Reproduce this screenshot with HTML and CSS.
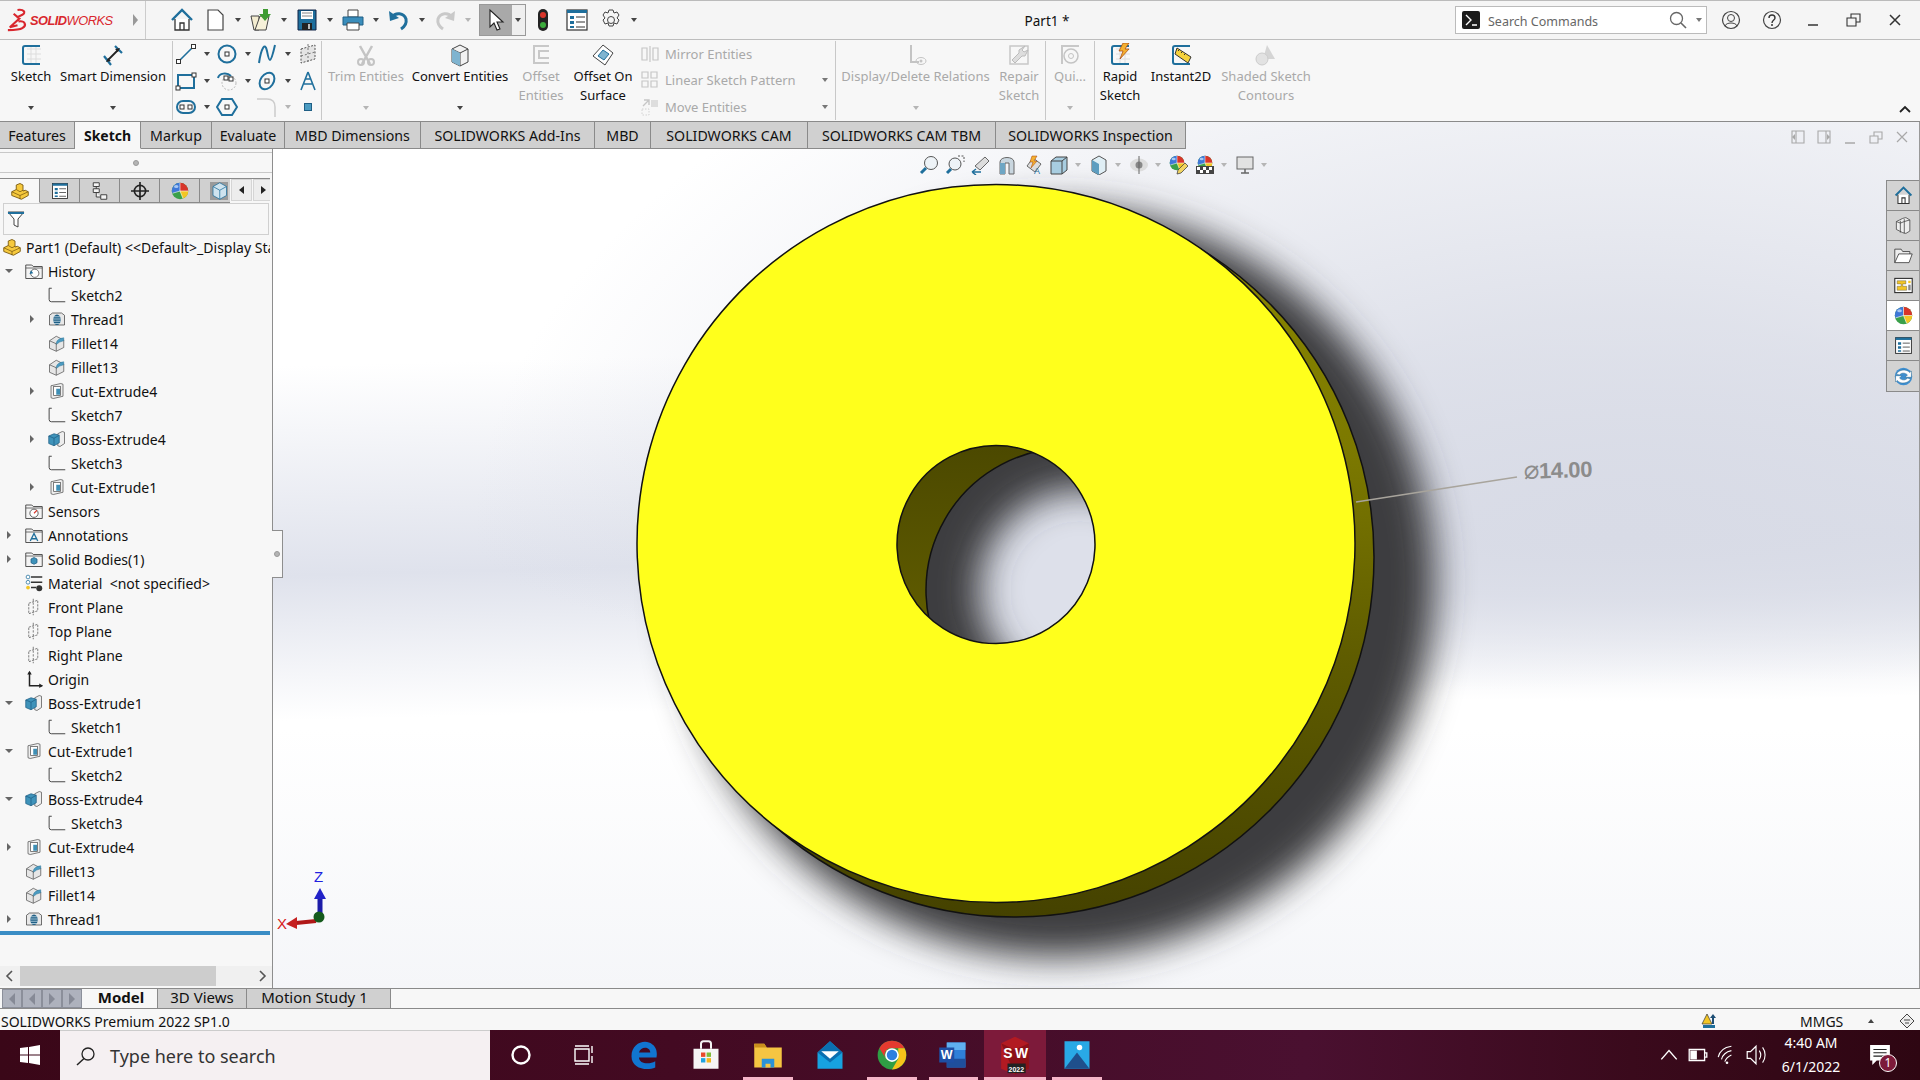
FILE: index.html
```html
<!DOCTYPE html>
<html lang="en">
<head>
<meta charset="utf-8">
<title>SOLIDWORKS Part1</title>
<link rel="stylesheet" href="styles.css">
</head>
<body>
<svg class="defs" width="0" height="0">
<defs>
<symbol id="s-home" viewBox="0 0 24 24"><path d="M2 12 12 2l10 10" fill="none" stroke="#1f6f9c" stroke-width="2.400"/><path d="M5 11v11h14V11" fill="#fff" stroke="#333" stroke-width="1.300"/><path d="M10 22v-7h4v7" fill="none" stroke="#333" stroke-width="1.300"/></symbol>
<symbol id="s-sketch" viewBox="0 0 24 24"><path d="M5 3H1.500v15q0 3 3 3H23" fill="none" stroke="#444" stroke-width="1.300"/></symbol>
<symbol id="s-thread" viewBox="0 0 24 24"><path d="M2 7l4-3h12l4 3v13H2z" fill="#e8e8e8" stroke="#444"/><ellipse cx="12" cy="13" rx="5" ry="7" fill="#1f5f85"/><path d="M7 9h10M7 12h10M7 15h10M8 18h8" stroke="#cfe3ee"/></symbol>
<symbol id="s-fillet" viewBox="0 0 24 24"><path d="M2 9v10l9 4 10-5V8L11 3z" fill="#e6e6e6" stroke="#555"/><path d="M11 14V12Q12 6 21 5v4q-6 1-10 5z" fill="#4b9bc1" stroke="#2a6f92" stroke-width=".6"/><path d="M2 9l9 4v10" fill="none" stroke="#555"/></symbol>
<symbol id="s-cut" viewBox="0 0 24 24"><path d="M4 5l13-3 3 1v16l-13 3-3-1z" fill="#eee" stroke="#555"/><rect x="7.500" y="6" width="9" height="12" fill="#fff" stroke="#555"/><path d="M11 9h5v8h-5z" fill="#3f8fb5"/></symbol>
<symbol id="s-boss" viewBox="0 0 24 24"><path d="M13 5l6-3 3 1v15l-6 4-3-1z" fill="#eee" stroke="#555"/><path d="M1 8l7-3 7 2v10l-7 4-7-3z" fill="#3f93ba" stroke="#1f5f85"/><path d="M1 8l7 3 7-4M8 11v10" fill="none" stroke="#1f5f85"/></symbol>
<symbol id="s-folder" viewBox="0 0 24 24"><path d="M1 4h8l2 2h12v16H1z" fill="#f4f4f4" stroke="#444" stroke-width="1.200"/><path d="M1 8h22" stroke="#444"/></symbol>
<symbol id="s-plane" viewBox="0 0 24 24"><path d="M5 7l12-4v14l-12 4z" fill="none" stroke="#555" stroke-dasharray="3 1.500"/><path d="M11 1v22" stroke="#555" stroke-dasharray="3 2"/></symbol>
<symbol id="s-part" viewBox="0 0 24 24"><path d="M1 13l6-3V4l5-2 4 2v8l3-1 4 2v5l-9 5-13-5z" fill="#f6c93d" stroke="#7a5a10" stroke-width="1.200"/><path d="M1 13l11 5 11-5M12 18v5M7 10l5 3 4-2" fill="none" stroke="#7a5a10"/></symbol>
<symbol id="s-list" viewBox="0 0 24 24"><rect x="2" y="2" width="20" height="20" fill="#fff" stroke="#333" stroke-width="1.200"/><rect x="2" y="2" width="20" height="3" fill="#1f6f9c"/><path d="M5 8h4v3H5zM5 13h4v3H5zM5 18h4v2H5z" fill="#1f6f9c"/><path d="M11 9h9M11 14h9M11 19h9" stroke="#333"/></symbol>
<symbol id="s-ball" viewBox="0 0 24 24"><circle cx="12" cy="12" r="11" fill="#3aa04a"/><path d="M12 12V1A11 11 0 0 0 1 12l1 3z" fill="#3f78d8"/><path d="M12 12V1a11 11 0 0 1 11 11z" fill="#d8352a"/><path d="M12 12h11a11 11 0 0 1-7 10z" fill="#f3c625"/><path d="M12 12V1M12 12H23M12 12L2 15M12 12l4 10" stroke="#fff" stroke-width=".8"/><ellipse cx="7" cy="6" rx="3" ry="2" fill="#a9c8f2"/></symbol>
</defs>
</svg>

<header class="titlebar">
  <div class="logo">
    <svg class="logo-mark" viewBox="0 0 26 26"><path d="M13 2c7-1 9 3 5 5l-6 3M9 6l6 5-10 9 8-2M14 14c7-1 9 4 4 7-3 2-9 2-15 2" fill="none" stroke="#d9272e" stroke-width="2.200"/></svg>
    <span class="logo-text"><b>SOLID</b>WORKS</span>
  </div>
  <span class="tri-right"></span>
  <div class="qat">
    <svg class="qi"><use href="#s-home"/></svg>
    <svg class="qi" viewBox="0 0 24 24"><path d="M5 2h10l5 5v15H5z" fill="#fff" stroke="#444" stroke-width="1.200"/></svg><span class="dd dk"></span>
    <svg class="qi" viewBox="0 0 24 24"><path d="M2 8h8v14H5z" fill="#f3ecd0" stroke="#444"/><path d="M6 22l5-14h9l-3 14z" fill="#f7f1d9" stroke="#444"/><path d="M14 1h5v5h3l-6 7-6-7h4z" fill="#3f9b32"/></svg><span class="dd dk"></span>
    <svg class="qi" viewBox="0 0 24 24"><path d="M3 2h18v20H3z" fill="#1f6f9c" stroke="#124"/><path d="M6 3h12v8H6z" fill="#fff"/><path d="M7 5h10M7 8h10" stroke="#888"/><path d="M7 15h10v7H7z" fill="#222"/><path d="M13 16h2v5h-2z" fill="#bbb"/></svg><span class="dd dk"></span>
    <svg class="qi" viewBox="0 0 24 24"><path d="M7 2h10v7H7z" fill="#fff" stroke="#444"/><path d="M2 9h20v8H2z" fill="#3a8dbb" stroke="#1f5f85"/><path d="M6 15h12v7H6z" fill="#fff" stroke="#444"/></svg><span class="dd dk"></span>
    <svg class="qi" viewBox="0 0 24 24"><path d="M5 9a8 8 0 0 1 14 2c1 5-2 8-5 10" fill="none" stroke="#1f6f9c" stroke-width="3"/><path d="M2 3l1 10 9-3z" fill="#1f6f9c"/></svg><span class="dd dk"></span>
    <svg class="qi" viewBox="0 0 24 24"><path d="M19 9A8 8 0 0 0 5 11c-1 5 2 8 5 10" fill="none" stroke="#c9c9c9" stroke-width="3"/><path d="M22 3l-1 10-9-3z" fill="#c9c9c9"/></svg><span class="dd lt"></span>
    <div class="select-btn">
      <div class="select-main"><svg class="qi" viewBox="0 0 24 24"><path d="M6 2l0 17 4-4 3 7 3-1-3-7 6 0z" fill="#fff" stroke="#222" stroke-width="1.100"/></svg></div>
      <span class="dd dk"></span>
    </div>
    <svg class="qi" viewBox="0 0 24 24"><rect x="7" y="1" width="10" height="22" rx="5" fill="#222"/><circle cx="12" cy="7" r="3" fill="#d8352a"/><circle cx="12" cy="17" r="3" fill="#3cab3c"/></svg>
    <svg class="qi" viewBox="0 0 24 24"><use href="#s-list"/></svg>
    <svg class="qi" viewBox="0 0 24 24"><circle cx="12" cy="12" r="3.500" fill="none" stroke="#444"/><path d="M10 2h4l1 3 3-1 2 3-2 3 2 2-2 4-3-1-1 3h-4l-1-3-3 1-2-4 2-2-2-3 2-3 3 1z" fill="none" stroke="#444"/></svg><span class="dd dk"></span>
  </div>
  <div class="doc-title">Part1 *</div>
  <div class="search">
    <svg class="term" viewBox="0 0 18 18"><rect width="18" height="18" rx="2" fill="#1c1c1c"/><path d="M4 4l5 5-5 5M10 14h5" fill="none" stroke="#fff" stroke-width="1.400"/></svg>
    <span class="search-text">Search Commands</span>
    <svg class="mag" viewBox="0 0 18 18"><circle cx="7.500" cy="7.500" r="6" fill="none" stroke="#666" stroke-width="1.300"/><path d="M12 12l5 5" stroke="#666" stroke-width="1.600"/></svg>
    <span class="dd md"></span>
  </div>
  <div class="win-ctrls">
    <svg class="wc" viewBox="0 0 20 20"><circle cx="10" cy="10" r="8.500" fill="none" stroke="#444" stroke-width="1.200"/><circle cx="10" cy="8" r="3.500" fill="none" stroke="#444"/><path d="M4 16c1-4 11-4 12 0" fill="none" stroke="#444"/></svg>
    <svg class="wc" viewBox="0 0 20 20"><circle cx="10" cy="10" r="8.500" fill="none" stroke="#444" stroke-width="1.200"/><path d="M7 8c0-4 6-4 6 0 0 2-3 2-3 5" fill="none" stroke="#333" stroke-width="1.400"/><circle cx="10" cy="15" r="1" fill="#333"/></svg>
    <svg class="wc" viewBox="0 0 20 20"><path d="M5 15h10" stroke="#333" stroke-width="1.500"/></svg>
    <svg class="wc" viewBox="0 0 20 20"><path d="M3 8h9v8H3zM7 8V4h9v8h-4" fill="none" stroke="#333" stroke-width="1.100"/></svg>
    <svg class="wc" viewBox="0 0 20 20"><path d="M5 5l10 10M15 5L5 15" stroke="#333" stroke-width="1.500"/></svg>
  </div>
</header>

<section class="ribbon">
  <div class="group g1">
    <div class="btn w62"><svg class="ri" viewBox="0 0 24 24"><path d="M8 6h14M8 11h14M8 16h14M12 3v17M17 3v17" stroke="#ddd"/><path d="M21 3H6Q4 3 4 5v14q0 2 2 2h15" fill="none" stroke="#1f6f9c" stroke-width="2"/></svg><span class="lb">Sketch</span><span class="dd dk"></span></div>
    <div class="btn w102"><svg class="ri" viewBox="0 0 24 24"><path d="M3 13l7 9M14 3l7 7" stroke="#1f6f9c" stroke-width="2.200" fill="none"/><path d="M7 17L17 7" stroke="#222" stroke-width="1.800"/><path d="M5 19l5-1-3-3zM19 5l-5 1 3 3z" fill="#222"/></svg><span class="lb">Smart Dimension</span><span class="dd dk"></span></div>
  </div>
  <div class="group g2">
    <div class="tool"><svg class="ti" viewBox="0 0 22 22"><path d="M4 18L18 4" stroke="#1f6f9c" stroke-width="1.600"/><rect x="1.500" y="16.500" width="4" height="4" fill="#fff" stroke="#333"/><rect x="16.500" y="1.500" width="4" height="4" fill="#fff" stroke="#333"/></svg><span class="dd dk"></span></div>
    <div class="tool"><svg class="ti" viewBox="0 0 22 22"><circle cx="11" cy="11" r="8.500" fill="none" stroke="#1f6f9c" stroke-width="2"/><rect x="9" y="9" width="4" height="4" fill="#fff" stroke="#333"/></svg><span class="dd dk"></span></div>
    <div class="tool"><svg class="ti" viewBox="0 0 22 22"><path d="M3 20C5 6 9-2 11 8s3 16 8-6" fill="none" stroke="#1f6f9c" stroke-width="2"/></svg><span class="dd dk"></span></div>
    <div class="tool"><svg class="ti" viewBox="0 0 22 22"><path d="M4 6l14-4v14L4 20z" fill="#e4e4e4" stroke="#555" stroke-dasharray="2 1.500"/><path d="M11 1v20M4 13l14-4" stroke="#777" stroke-dasharray="2 2"/></svg></div>
    <div class="tool"><svg class="ti" viewBox="0 0 22 22"><rect x="3" y="5" width="16" height="13" fill="none" stroke="#1f6f9c" stroke-width="2"/><rect x="1" y="16" width="4" height="4" fill="#fff" stroke="#333"/><rect x="17" y="3" width="4" height="4" fill="#fff" stroke="#333"/></svg><span class="dd dk"></span></div>
    <div class="tool"><svg class="ti" viewBox="0 0 22 22"><circle cx="13" cy="13" r="7" fill="none" stroke="#bbb" stroke-dasharray="2 1.500"/><path d="M2 8c1-5 9-6 13-2" fill="none" stroke="#1f6f9c" stroke-width="2"/><rect x="8" y="6" width="4" height="4" fill="#fff" stroke="#333"/><rect x="13" y="7" width="4" height="4" fill="#fff" stroke="#333"/></svg><span class="dd dk"></span></div>
    <div class="tool"><svg class="ti" viewBox="0 0 22 22"><ellipse cx="11" cy="11" rx="6.500" ry="9" transform="rotate(35 11 11)" fill="none" stroke="#1f6f9c" stroke-width="2"/><rect x="9" y="9" width="4" height="4" fill="#fff" stroke="#333"/></svg><span class="dd dk"></span></div>
    <div class="tool"><svg class="ti" viewBox="0 0 22 22"><path d="M11 2L4 20M11 2l7 18M7 14h8M8 9h6" fill="none" stroke="#1f6f9c" stroke-width="1.600"/></svg></div>
    <div class="tool"><svg class="ti" viewBox="0 0 22 22"><rect x="2" y="5" width="18" height="12" rx="6" fill="none" stroke="#1f6f9c" stroke-width="2"/><rect x="5" y="9" width="4" height="4" fill="#fff" stroke="#333"/><rect x="13" y="9" width="4" height="4" fill="#fff" stroke="#333"/></svg><span class="dd dk"></span></div>
    <div class="tool"><svg class="ti" viewBox="0 0 22 22"><path d="M6 3h10l5 8-5 8H6l-5-8z" fill="none" stroke="#1f6f9c" stroke-width="2"/><rect x="9" y="9" width="4" height="4" fill="#fff" stroke="#333"/></svg></div>
    <div class="tool"><svg class="ti" viewBox="0 0 22 22"><path d="M1 3h10q8 0 8 8v10" fill="none" stroke="#ccc" stroke-width="1.500"/></svg><span class="dd lt"></span></div>
    <div class="tool"><span class="sq"></span></div>
  </div>
  <div class="group g3">
    <div class="btn w88 off"><svg class="ri" viewBox="0 0 24 24"><path d="M6 3l10 18M18 3L8 21" stroke="#c4c4c4" stroke-width="2.500"/><circle cx="7" cy="19" r="3" fill="none" stroke="#c4c4c4" stroke-width="2"/><circle cx="17" cy="19" r="3" fill="none" stroke="#c4c4c4" stroke-width="2"/></svg><span class="lb">Trim Entities</span><span class="dd lt"></span></div>
    <div class="btn w100"><svg class="ri" viewBox="0 0 24 24"><path d="M4 6l8-4 8 4v13l-8 4-8-4z" fill="#f2f2f2" stroke="#444"/><path d="M4 6l8 4 8-4M12 10v13" fill="none" stroke="#444"/><path d="M4 6l8 4v13l-8-4z" fill="#7fb4d0"/></svg><span class="lb">Convert Entities</span><span class="dd dk"></span></div>
    <div class="btn w62 off"><svg class="ri" viewBox="0 0 24 24"><path d="M20 3H5v17h15M20 8H10v7h10" fill="none" stroke="#c8c8c8" stroke-width="2"/></svg><span class="lb">Offset<br>Entities</span></div>
    <div class="btn w62"><svg class="ri" viewBox="0 0 24 24"><path d="M2 13L12 2l10 8-8 12z" fill="#fff" stroke="#444"/><path d="M7 13l5-6 6 4-5 6z" fill="#7fb4d0" stroke="#1f6f9c"/></svg><span class="lb">Offset On<br>Surface</span></div>
    <div class="stack">
      <div class="line"><svg class="si" viewBox="0 0 18 18"><path d="M1 3h5v12H1zM12 3h5v12h-5zM9 1v16" fill="none" stroke="#c6c6c6" stroke-width="1.200"/></svg><span>Mirror Entities</span></div>
      <div class="line"><svg class="si" viewBox="0 0 18 18"><path d="M1 1h6v6H1zM10 1h6v6h-6zM1 10h6v6H1zM10 10h6v6h-6z" fill="none" stroke="#c6c6c6" stroke-width="1.200"/></svg><span>Linear Sketch Pattern</span><i class="dd md push"></i></div>
      <div class="line"><svg class="si" viewBox="0 0 18 18"><path d="M2 8l6-6M3 2h5v5" fill="none" stroke="#c6c6c6" stroke-width="1.400"/><rect x="10" y="2" width="7" height="7" fill="#ddd"/><path d="M1 11h7v6H1z" fill="none" stroke="#d2d2d2" stroke-dasharray="1.500 1.500"/></svg><span>Move Entities</span><i class="dd md push"></i></div>
    </div>
  </div>
  <div class="group g4">
    <div class="btn w159 off"><svg class="ri" viewBox="0 0 24 24"><path d="M7 2v17h8" fill="none" stroke="#c4c4c4" stroke-width="2"/><ellipse cx="17" cy="18" rx="5" ry="3.500" fill="none" stroke="#c4c4c4"/><circle cx="17" cy="18" r="1.500" fill="#c4c4c4"/></svg><span class="lb">Display/Delete Relations</span><span class="dd lt"></span></div>
    <div class="btn w48 off"><svg class="ri" viewBox="0 0 24 24"><path d="M3 3h18v18H3z" fill="none" stroke="#c8c8c8" stroke-width="1.500"/><path d="M18 3l-3 4 2 2 4-2-3 6-3 0-7 7-3-3 7-7v-3z" fill="#ddd" stroke="#bbb"/></svg><span class="lb">Repair<br>Sketch</span></div>
  </div>
  <div class="group g5">
    <div class="btn w48 off"><svg class="ri" viewBox="0 0 24 24"><path d="M3 3h18M4 3v18" stroke="#c8c8c8" stroke-width="2"/><circle cx="13" cy="13" r="7" fill="none" stroke="#c4c4c4" stroke-width="1.500"/><circle cx="13" cy="13" r="2.500" fill="none" stroke="#c4c4c4"/></svg><span class="lb">Qui...</span><span class="dd lt"></span></div>
  </div>
  <div class="group g6">
    <div class="btn w50"><svg class="ri" viewBox="0 0 24 24"><path d="M8 6h14M8 11h14M8 16h14M12 3v17M17 3v17" stroke="#ddd"/><path d="M21 3H6Q4 3 4 5v14q0 2 2 2h15" fill="none" stroke="#1f6f9c" stroke-width="2"/><path d="M15 0l6 0-4 6 4 0-9 10 3-8-4 0z" fill="#f4b030" stroke="#a4400a" stroke-width=".7"/></svg><span class="lb">Rapid<br>Sketch</span></div>
    <div class="btn w72"><svg class="ri" viewBox="0 0 24 24"><path d="M21 3H6Q4 3 4 5v14q0 2 2 2h15" fill="none" stroke="#1f6f9c" stroke-width="2"/><path d="M8 5l14 9-3 6L6 11z" fill="#f5d23c" stroke="#333"/><path d="M9 8l2-2M12 10l2-2M15 12l2-2" stroke="#333"/></svg><span class="lb">Instant2D</span></div>
    <div class="btn w98 off"><svg class="ri" viewBox="0 0 24 24"><path d="M13 2l8 14H9z" fill="#d5d5d5"/><circle cx="8" cy="16" r="6" fill="#e2e2e2" stroke="#ccc"/></svg><span class="lb">Shaded Sketch<br>Contours</span></div>
  </div>
  <svg class="collapse" viewBox="0 0 12 8"><path d="M1 7l5-5 5 5" fill="none" stroke="#222" stroke-width="1.800"/></svg>
</section>

<nav class="tabs">
  <span class="tab t75">Features</span>
  <span class="tab t66 on">Sketch</span>
  <span class="tab t71">Markup</span>
  <span class="tab t73">Evaluate</span>
  <span class="tab t136">MBD Dimensions</span>
  <span class="tab t174">SOLIDWORKS Add-Ins</span>
  <span class="tab t56">MBD</span>
  <span class="tab t157">SOLIDWORKS CAM</span>
  <span class="tab t188">SOLIDWORKS CAM TBM</span>
  <span class="tab t190">SOLIDWORKS Inspection</span>
</nav>

<main class="main">
  <aside class="panel">
    <div class="grip"><span class="dot"></span></div>
    <div class="ptabs">
      <span class="ptab on"><svg class="pi"><use href="#s-part"/></svg></span>
      <span class="ptab"><svg class="pi"><use href="#s-list"/></svg></span>
      <span class="ptab"><svg class="pi" viewBox="0 0 24 24"><path d="M3 1h8v5H3zM3 9h8v5H3zM13 17h8v6h-8zM7 6v3M7 14v6h6" fill="#f4f4f4" stroke="#333" stroke-width="1.200"/></svg></span>
      <span class="ptab"><svg class="pi" viewBox="0 0 24 24"><circle cx="12" cy="12" r="7.500" fill="none" stroke="#222" stroke-width="2.200"/><path d="M12 0v24M0 12h24" stroke="#222" stroke-width="2.200"/></svg></span>
      <span class="ptab"><svg class="pi"><use href="#s-ball"/></svg></span>
      <span class="ptab cut"><svg class="pi" viewBox="0 0 24 24"><rect width="24" height="24" fill="#9a9a9a"/><path d="M4 6l9-5 9 5v12l-9 5-9-5z" fill="#cfe3ee" stroke="#1f6f9c"/><path d="M4 6l9 5 9-5M13 11v12" fill="none" stroke="#1f6f9c"/></svg></span>
      <span class="parrow"><i class="tl"></i></span>
      <span class="parrow"><i class="tr"></i></span>
    </div>
    <div class="filter"><svg class="fi" viewBox="0 0 18 18"><path d="M1 2h16l-6 7v8l-4-2V9z" fill="#fff" stroke="#444"/><path d="M1 2h16v2H1z" fill="#1f6f9c"/></svg></div>
    <div class="tree">
      <div class="row root"><svg class="ic"><use href="#s-part"/></svg><span>Part1 (Default) &lt;&lt;Default&gt;_Display State 1&gt;</span></div>
      <div class="row"><i class="tw open"></i><svg class="ic" viewBox="0 0 24 24"><use href="#s-folder"/><circle cx="13" cy="15" r="5.500" fill="#fff" stroke="#444"/><path d="M8 11l-2 5 5-1" fill="#1f6f9c"/></svg><span>History</span></div>
      <div class="row sub"><i class="tw"></i><svg class="ic"><use href="#s-sketch"/></svg><span>Sketch2</span></div>
      <div class="row sub"><i class="tw shut"></i><svg class="ic"><use href="#s-thread"/></svg><span>Thread1</span></div>
      <div class="row sub"><i class="tw"></i><svg class="ic"><use href="#s-fillet"/></svg><span>Fillet14</span></div>
      <div class="row sub"><i class="tw"></i><svg class="ic"><use href="#s-fillet"/></svg><span>Fillet13</span></div>
      <div class="row sub"><i class="tw shut"></i><svg class="ic"><use href="#s-cut"/></svg><span>Cut-Extrude4</span></div>
      <div class="row sub"><i class="tw"></i><svg class="ic"><use href="#s-sketch"/></svg><span>Sketch7</span></div>
      <div class="row sub"><i class="tw shut"></i><svg class="ic"><use href="#s-boss"/></svg><span>Boss-Extrude4</span></div>
      <div class="row sub"><i class="tw"></i><svg class="ic"><use href="#s-sketch"/></svg><span>Sketch3</span></div>
      <div class="row sub"><i class="tw shut"></i><svg class="ic"><use href="#s-cut"/></svg><span>Cut-Extrude1</span></div>
      <div class="row"><i class="tw"></i><svg class="ic" viewBox="0 0 24 24"><use href="#s-folder"/><circle cx="12" cy="15" r="5.500" fill="#fff" stroke="#333"/><path d="M12 15l4-4" stroke="#d8352a" stroke-width="1.500"/></svg><span>Sensors</span></div>
      <div class="row"><i class="tw shut"></i><svg class="ic" viewBox="0 0 24 24"><use href="#s-folder"/><path d="M7 20l5-10 5 10M9 17h6" fill="none" stroke="#1f6f9c" stroke-width="1.800"/></svg><span>Annotations</span></div>
      <div class="row"><i class="tw shut"></i><svg class="ic" viewBox="0 0 24 24"><use href="#s-folder"/><path d="M8 12l4-2 4 2v5l-4 2-4-2z" fill="#3f93ba" stroke="#1f5f85"/></svg><span>Solid Bodies(1)</span></div>
      <div class="row"><i class="tw"></i><svg class="ic" viewBox="0 0 24 24"><path d="M8 4h15M8 11h15M8 18h7" stroke="#333" stroke-width="2"/><circle cx="4" cy="4" r="2.500" fill="#fff" stroke="#1f6f9c"/><circle cx="4" cy="11" r="2.500" fill="#fff" stroke="#1f6f9c"/><circle cx="4" cy="18" r="2.500" fill="#f3c625"/><circle cx="19" cy="19" r="4" fill="#333"/></svg><span>Material&nbsp; &lt;not specified&gt;</span></div>
      <div class="row"><i class="tw"></i><svg class="ic"><use href="#s-plane"/></svg><span>Front Plane</span></div>
      <div class="row"><i class="tw"></i><svg class="ic"><use href="#s-plane"/></svg><span>Top Plane</span></div>
      <div class="row"><i class="tw"></i><svg class="ic"><use href="#s-plane"/></svg><span>Right Plane</span></div>
      <div class="row"><i class="tw"></i><svg class="ic" viewBox="0 0 24 24"><path d="M6 3v18h17" fill="none" stroke="#222" stroke-width="2"/><path d="M3 6l3-5 3 5zM19 18l5 3-5 3z" fill="#222"/></svg><span>Origin</span></div>
      <div class="row"><i class="tw open"></i><svg class="ic"><use href="#s-boss"/></svg><span>Boss-Extrude1</span></div>
      <div class="row sub"><i class="tw"></i><svg class="ic"><use href="#s-sketch"/></svg><span>Sketch1</span></div>
      <div class="row"><i class="tw open"></i><svg class="ic"><use href="#s-cut"/></svg><span>Cut-Extrude1</span></div>
      <div class="row sub"><i class="tw"></i><svg class="ic"><use href="#s-sketch"/></svg><span>Sketch2</span></div>
      <div class="row"><i class="tw open"></i><svg class="ic"><use href="#s-boss"/></svg><span>Boss-Extrude4</span></div>
      <div class="row sub"><i class="tw"></i><svg class="ic"><use href="#s-sketch"/></svg><span>Sketch3</span></div>
      <div class="row"><i class="tw shut"></i><svg class="ic"><use href="#s-cut"/></svg><span>Cut-Extrude4</span></div>
      <div class="row"><i class="tw"></i><svg class="ic"><use href="#s-fillet"/></svg><span>Fillet13</span></div>
      <div class="row"><i class="tw"></i><svg class="ic"><use href="#s-fillet"/></svg><span>Fillet14</span></div>
      <div class="row"><i class="tw shut"></i><svg class="ic"><use href="#s-thread"/></svg><span>Thread1</span></div>
    </div>
    <div class="blue-line"></div>
    <div class="hscroll">
      <svg class="chev" viewBox="0 0 20 20"><path d="M12 5l-5 5 5 5" fill="none" stroke="#555" stroke-width="1.600"/></svg>
      <span class="thumb"></span>
      <svg class="chev end" viewBox="0 0 20 20"><path d="M8 5l5 5-5 5" fill="none" stroke="#555" stroke-width="1.600"/></svg>
    </div>
  </aside>

  <section class="canvas">
    <svg class="scene" viewBox="273 121 1647 867" width="1647" height="867">
      <defs>
        <filter id="blur" x="-20%" y="-20%" width="140%" height="140%"><feGaussianBlur stdDeviation="18"/></filter>
        <linearGradient id="wall" x1="0" y1="0" x2="0" y2="1"><stop offset="0" stop-color="#8c8800"/><stop offset=".35" stop-color="#7c7900"/><stop offset=".65" stop-color="#5e5b00"/><stop offset="1" stop-color="#454200"/></linearGradient>
        <linearGradient id="bore" x1="0" y1="0" x2="0" y2="1"><stop offset="0" stop-color="#4a4700"/><stop offset="1" stop-color="#6c6800"/></linearGradient>
        <clipPath id="inner"><circle cx="996" cy="544.500" r="99"/></clipPath>
      </defs>
      <path filter="url(#blur)" fill-rule="evenodd" fill="#3c3d40" d="M1056 207a379 375 0 1 0 .01 0zM1080 490a100 100 0 1 1-.01 0z"/>
      <circle cx="1014" cy="557" r="360" fill="url(#wall)" stroke="#111" stroke-width="1.500"/>
      <g clip-path="url(#inner)">
        <rect x="880" y="430" width="230" height="230" fill="#dde0ea"/>
        <path filter="url(#blur)" fill-rule="evenodd" fill="#3c3d40" d="M700 250h700v700H700zM1080 490a100 100 0 1 1-.01 0z"/>
        <path fill-rule="evenodd" fill="url(#bore)" stroke="#111" stroke-width="1.500" d="M880 430h230v230H880zM1068 448a142 142 0 1 0 .01 0z"/>
      </g>
      <path fill-rule="evenodd" fill="#ffff1c" stroke="#111" stroke-width="1.500" d="M996 184.500a359 359 0 1 0 .01 0zM996 445.500a99 99 0 1 1-.01 0z"/>
      <path d="M1356 502L1517 477" stroke="#a8a49c" stroke-width="1.500"/>
      <text class="dim" x="1524" y="479" transform="rotate(-2 1524 479)"><tspan class="dim-phi">⌀</tspan>14.00</text>
      <path d="M320 920v-22" stroke="#1c1ca8" stroke-width="5"/><path d="M314 899l6-11 6 11z" fill="#2222c8"/>
      <path d="M316 921l-20 2" stroke="#b01818" stroke-width="4"/><path d="M297 917l-11 7 11 5z" fill="#c52020"/>
      <circle cx="319" cy="917" r="5.500" fill="#145a1c"/>
      <text class="ax-z" x="314" y="882">Z</text><text class="ax-x" x="277" y="929">X</text>
    </svg>
    <div class="view-bar">
      <svg class="vi" viewBox="0 0 20 20"><circle cx="12" cy="8" r="6.500" fill="#eef3f7" stroke="#555"/><path d="M7 13l-5 5" stroke="#1f6f9c" stroke-width="3"/></svg>
      <svg class="vi" viewBox="0 0 20 20"><circle cx="10" cy="9" r="6" fill="#eef3f7" stroke="#555"/><path d="M6 14l-4 4" stroke="#1f6f9c" stroke-width="3"/><path d="M13 1h6v6" fill="none" stroke="#555" stroke-dasharray="2 1.500"/></svg>
      <svg class="vi" viewBox="0 0 20 20"><path d="M4 11l10-9 4 4-9 9z" fill="#ddd" stroke="#666"/><path d="M1 17h9M1 17l4-3M1 17l4 3" stroke="#1f6f9c" stroke-width="1.500" fill="none"/></svg>
      <svg class="vi" viewBox="0 0 20 20"><path d="M3 7c0-6 14-6 14 0v12h-5V8H8v11H3z" fill="#c9d6df" stroke="#666"/><path d="M3 8h5v11H3z" fill="#6ea6c4"/></svg>
      <svg class="vi" viewBox="0 0 20 20"><path d="M4 11l6-8 8 6-6 8z" fill="#ddd" stroke="#666"/><path d="M9 1l5 0-3 5h3l-6 7 2-6H7z" fill="#f4b030" stroke="#a4400a" stroke-width=".5"/><text x="11" y="19" class="vi-a">A</text></svg>
      <span class="vbox"><svg class="vi" viewBox="0 0 20 20"><path d="M2 6l5-4h11v13l-5 4H2z" fill="#a8cde0" stroke="#444"/><path d="M2 6h11v13M13 6l5-4" fill="none" stroke="#444"/></svg><span class="dd lt"></span></span>
      <span class="vbox"><svg class="vi" viewBox="0 0 20 20"><path d="M3 5l7-4 7 4v11l-7 4-7-4z" fill="#dfeef5" stroke="#555"/><path d="M3 5l7 4v11l-7-4z" fill="#5d9dc0"/></svg><span class="dd lt"></span></span>
      <span class="vbox"><svg class="vi" viewBox="0 0 20 20"><ellipse cx="10" cy="10" rx="9" ry="6.500" fill="#ddd"/><circle cx="10" cy="10" r="3.500" fill="#888"/><path d="M10 1v18" stroke="#666"/></svg><span class="dd lt"></span></span>
      <span class="vbox"><svg class="vi" viewBox="0 0 20 20"><use href="#s-ball" width="16" height="16"/><path d="M8 19l1-4 7-7 3 3-7 7z" fill="#f3d560" stroke="#444" stroke-width=".8"/></svg></span>
      <span class="vbox"><svg class="vi" viewBox="0 0 20 20"><use href="#s-ball" x="2" width="16" height="16"/><rect x="1" y="11" width="18" height="8" fill="#444"/><path d="M2 12h3v3H2zM8 12h3v3H8zM14 12h3v3h-3zM5 15h3v3H5zM11 15h3v3h-3z" fill="#fff"/></svg><span class="dd lt"></span></span>
      <span class="vbox"><svg class="vi" viewBox="0 0 20 20"><rect x="2" y="2" width="16" height="12" fill="#e2e2e2" stroke="#666"/><path d="M10 14v4M6 18h8" stroke="#666" stroke-width="1.500"/></svg><span class="dd lt"></span></span>
    </div>
    <div class="doc-ctrls">
      <svg class="dc" viewBox="0 0 14 14"><path d="M1 1h12v12H1zM5 1v12" fill="none" stroke="#a8a8a8" stroke-width="1.100"/><path d="M4 4v6L1 7z" fill="#a8a8a8"/></svg>
      <svg class="dc" viewBox="0 0 14 14"><path d="M1 1h12v12H1zM9 1v12" fill="none" stroke="#a8a8a8" stroke-width="1.100"/><path d="M10 4v6l3-3z" fill="#a8a8a8"/></svg>
      <svg class="dc" viewBox="0 0 14 14"><path d="M2 13h10" stroke="#a8a8a8" stroke-width="1.500"/></svg>
      <svg class="dc" viewBox="0 0 14 14"><path d="M1 6h8v7H1zM5 6V2h8v7H9" fill="none" stroke="#a8a8a8" stroke-width="1.100"/></svg>
      <svg class="dc" viewBox="0 0 14 14"><path d="M2 2l10 10M12 2L2 12" stroke="#a8a8a8" stroke-width="1.200"/></svg>
    </div>
    <div class="taskpane">
      <span class="tp"><svg class="tpi"><use href="#s-home"/></svg></span>
      <span class="tp"><svg class="tpi" viewBox="0 0 24 24"><path d="M3 7l4-2 4-2 4-1 5 3v14l-5 3-4-1-8-4z" fill="#eee" stroke="#444"/><path d="M8 6v15M13 4v18M3 7l5 2 5-2 7-2" fill="none" stroke="#444"/></svg></span>
      <span class="tp"><svg class="tpi" viewBox="0 0 24 24"><path d="M1 21V4h8l2 3h9v3" fill="#eee" stroke="#333"/><path d="M1 21l5-11h17l-4 11z" fill="#fff" stroke="#333"/></svg></span>
      <span class="tp"><svg class="tpi" viewBox="0 0 24 24"><rect x="1" y="3" width="22" height="18" fill="#fff" stroke="#222" stroke-width="1.300"/><path d="M4 6h11v4h-4v3h5v5H4v-5h5v-3H4z" fill="#f3c625" stroke="#444" stroke-width=".5"/><rect x="18" y="6" width="3" height="3" fill="#f3c625"/><rect x="18" y="11" width="3" height="7" fill="#888"/></svg></span>
      <span class="tp on"><svg class="tpi"><use href="#s-ball"/></svg></span>
      <span class="tp"><svg class="tpi"><use href="#s-list"/></svg></span>
      <span class="tp"><svg class="tpi" viewBox="0 0 24 24"><circle cx="12" cy="12" r="11" fill="#3f8fd0"/><path d="M3 9c3-6 13-7 17-2l2-2v8h-8l3-3c-3-3-8-3-10 0zM21 15c-3 6-13 7-17 2l-2 2v-8h8l-3 3c3 3 8 3 10 0z" fill="#fff" stroke="#1f5f85" stroke-width=".6"/></svg></span>
    </div>
  </section>
  <div class="notch"><span class="dot"></span></div>
</main>

<nav class="btabs">
  <div class="navs"><span class="nav"><i class="nl"></i></span><span class="nav"><i class="nl"></i></span><span class="nav"><i class="nr"></i></span><span class="nav"><i class="nr"></i></span></div>
  <span class="btab b76 on">Model</span>
  <span class="btab b89">3D Views</span>
  <span class="btab b144">Motion Study 1</span>
</nav>

<footer class="status">
  <span class="st-text">SOLIDWORKS Premium 2022 SP1.0</span>
  <svg class="st-ic" viewBox="0 0 16 16"><path d="M6 1L1 11h10z" fill="#f3c625" stroke="#333" stroke-width=".7"/><path d="M12 1l3 4h-2v6h-2V5H9z" fill="#1f4f75"/><path d="M2 12h12v3H2z" fill="#1f6f9c"/></svg>
  <span class="st-units">MMGS</span>
  <span class="st-up"></span>
  <svg class="st-end" viewBox="0 0 16 16"><path d="M1 8l7-7 7 7-7 7z" fill="#eee" stroke="#444"/><path d="M5 7h6M6 10h4" stroke="#444"/></svg>
</footer>

<div class="taskbar">
  <span class="start"><svg class="win" viewBox="0 0 20 20"><path d="M0 3l8-1v7.500H0zM9 2l11-2v9.500H9zM0 10.500h8V18l-8-1zM9 10.500h11V20l-11-2z" fill="#fff"/></svg></span>
  <div class="tsearch"><svg class="tmag" viewBox="0 0 20 20"><circle cx="12" cy="8" r="6" fill="none" stroke="#222" stroke-width="1.300"/><path d="M8 12.500L1 19" stroke="#222" stroke-width="1.500"/></svg><span>Type here to search</span></div>
  <div class="apps">
    <span class="app"><svg class="ai" viewBox="0 0 24 24"><circle cx="12" cy="12" r="8.500" fill="none" stroke="#fff" stroke-width="2.400"/></svg></span>
    <span class="app"><svg class="ai" viewBox="0 0 24 24"><path d="M4 3h14M4 6h14v12H4zM4 21h14M21 3v7M21 13v7" fill="none" stroke="#fff" stroke-width="1.400"/></svg></span>
    <span class="app"><svg class="ai big" viewBox="0 0 24 24"><path d="M2 13C2 4 10 0 16 2c5 2 7 6 6 12H8c0 5 8 6 13 3v5c-7 3-19 1-19-9zM8 10h9c0-5-8-5-9 0z" fill="#1175d0"/></svg></span>
    <span class="app"><svg class="ai big" viewBox="0 0 24 24"><path d="M2 7h20v16H2z" fill="#f5f5f5"/><path d="M8 7V3q0-2 2-2h4q2 0 2 2v4" fill="none" stroke="#f5f5f5" stroke-width="1.600"/><path d="M8 10h3.500v3.500H8z" fill="#e8492c"/><path d="M12.500 10H16v3.500h-3.500z" fill="#7fbb3a"/><path d="M8 14.500h3.500V18H8z" fill="#1fa3e0"/><path d="M12.500 14.500H16V18h-3.500z" fill="#f3b51c"/></svg></span>
    <span class="app under"><svg class="ai big" viewBox="0 0 24 24"><path d="M1 3h8l2 3h12v16H1z" fill="#f5c542"/><path d="M1 3h8l2 3H1z" fill="#c98f1c"/><path d="M7 15h10v7H7z" fill="#2a92d8"/><path d="M10 19h4v3h-4z" fill="#f5c542"/></svg></span>
    <span class="app"><svg class="ai big" viewBox="0 0 24 24"><path d="M12 1L2 10v13h20V10z" fill="#17a2e0"/><path d="M12 1L2 10l10 8 10-8z" fill="#0b6fb0"/><path d="M5 9h14l-7 6z" fill="#fff"/></svg></span>
    <span class="app under"><svg class="ai big" viewBox="0 0 24 24"><circle cx="12" cy="12" r="11.500" fill="#2f9e44"/><path d="M2 6.500A11.500 11.500 0 0 1 22 6.500H12a5.500 5.500 0 0 0-5 8.500z" fill="#e53a2f"/><path d="M22 6.500A11.500 11.500 0 0 1 12 23.500L17 15V6.500z" fill="#f6c21a"/><circle cx="12" cy="12" r="5.500" fill="#fff"/><circle cx="12" cy="12" r="4.200" fill="#2d7fe0"/></svg></span>
    <span class="app under"><svg class="ai big" viewBox="0 0 24 24"><path d="M7 2h15v20H7z" fill="#2f7fd8"/><path d="M7 2h15v6H7z" fill="#5fb0f0"/><path d="M7 15h15v7H7z" fill="#1f4f9c"/><path d="M1 6h12v12H1z" fill="#1e4fa5"/><text x="7" y="15.500" class="w-l">W</text></svg></span>
    <span class="app sw under"><svg class="ai bigger" viewBox="0 0 30 36"><path d="M15 1l13 6v24l-13 5-13-5V7z" fill="#b21a22"/><path d="M2 7l13 6 13-6v24l-13 5z" fill="#8c1118"/><text x="4" y="21" class="sw-l">S</text><text x="15" y="21" class="sw-l">W</text><rect x="8" y="26" width="17" height="9" fill="#222"/><text x="9" y="33.500" class="sw-y">2022</text></svg></span>
    <span class="app under"><svg class="ai big" viewBox="0 0 24 24"><rect x="2" y="1" width="20" height="22" fill="#29a9e6"/><path d="M2 23l10-13 10 13z" fill="#1f4f8c"/><circle cx="14" cy="6" r="2.200" fill="#fff"/></svg></span>
  </div>
  <div class="tray">
    <svg class="tr-i" viewBox="0 0 20 20"><path d="M3 14l7-8 7 8" fill="none" stroke="#fff" stroke-width="1.300"/></svg>
    <svg class="tr-i" viewBox="0 0 20 20"><path d="M2 5h14v10H2zM16 8h2v4h-2z" fill="none" stroke="#fff" stroke-width="1.200"/><path d="M3 6h6v8H3z" fill="#fff"/></svg>
    <svg class="tr-i" viewBox="0 0 20 20"><path d="M2 12C3 7 7 3 14 2M5 14c1-4 4-7 9-8M8 16c1-3 2-4 6-6" fill="none" stroke="#fff"/><circle cx="10" cy="17" r="1.200" fill="#fff"/></svg>
    <svg class="tr-i" viewBox="0 0 20 20"><path d="M2 7h3l5-5v16l-5-5H2z" fill="none" stroke="#fff" stroke-width="1.100"/><path d="M13 6c2 3 2 5 0 8M16 3c3 4 3 10 0 14" fill="none" stroke="#fff"/></svg>
    <div class="clock"><span>4:40 AM</span><span>6/1/2022</span></div>
    <div class="notif">
      <svg class="nt" viewBox="0 0 20 20"><path d="M1 1h18v14H7l-4 4v-4H1z" fill="#fff"/><path d="M4 5h12M4 8h12M4 11h12" stroke="#222"/></svg>
      <span class="badge">1</span>
    </div>
  </div>
</div>
</body>
</html>
```
FILE: styles.css
```css
* { box-sizing: border-box; }
html, body { margin: 0; padding: 0; }
body {
  width: 1920px; height: 1080px; overflow: hidden;
  display: flex; flex-direction: column;
  font-family: "Noto Sans", "Open Sans", sans-serif;
  font-size: 14px; color: #111; background: #f7f7f7;
}
svg { display: block; flex: none; }
.defs { position: absolute; }

/* triangles */
.dd { display: block; width: 0; height: 0; flex: none; border-left: 3.5px solid transparent; border-right: 3.5px solid transparent; border-top: 4px solid #444; }
.dd.lt { border-top-color: #b5b5b5; }
.dd.md { border-top-color: #777; }

/* title bar */
.titlebar { height: 40px; display: flex; align-items: center; background: #f5f5f5; border-top: 1px solid #bbb; border-bottom: 1px solid #bdbdbd; flex: none; }
.logo { width: 145px; height: 100%; display: flex; align-items: center; padding-left: 5px; position: relative; }
.logo-mark { width: 25px; height: 25px; }
.logo-text { font-family: "Liberation Sans", sans-serif; font-size: 12.800px; color: #d9272e; font-style: italic; letter-spacing: -.5px; }
.logo-text b { font-weight: 700; }
.tri-right { width: 0; height: 0; border-left: 5px solid #999; border-top: 6px solid transparent; border-bottom: 6px solid transparent; margin-left: -12px; margin-right: 7px; }
.qat { display: flex; align-items: center; height: 100%; border-left: 1px solid #ccc; padding-left: 24px; width: 1082px; }
.qi { width: 24px; height: 24px; }
.qat .dd { margin: 0 8px 0 8px; }
.qat > .qi + .qi { margin-left: 10px; }
.qat > .qi:first-child { margin-right: -1px; }
.select-btn { display: flex; align-items: center; width: 47px; height: 32px; border: 1px solid #999; margin-right: 5px; background: #efefef; }
.select-main { width: 32px; height: 100%; background: #a9a9a9; display: flex; align-items: center; justify-content: center; }
.select-btn .dd { margin: 0 0 0 3px; }
.doc-title { position: absolute; left: 1000px; width: 94px; text-align: center; top: 12px; font-size: 13.500px; }
.search { width: 252px; height: 28px; background: #fff; border: 1px solid #bbb; display: flex; align-items: center; padding: 0 4px 0 6px; margin-left: 228px; }
.term { width: 18px; height: 18px; }
.search-text { margin-left: 8px; font-size: 12.500px; color: #666; flex: 1; padding-top: 2px; }
.mag { width: 18px; height: 18px; margin-right: 9px; }
.win-ctrls { display: flex; align-items: center; margin-left: 14px; gap: 21px; }
.wc { width: 20px; height: 20px; }

/* ribbon */
.ribbon { height: 81px; display: flex; background: #f7f7f7; position: relative; flex: none; }
.group { display: flex; height: 79px; margin-top: 1px; border-right: 1px solid #c8c8c8; flex: none; }
.g1 { width: 173px; }
.g2 { width: 149px; display: grid; grid-template-columns: repeat(4, 36.500px); grid-template-rows: 26px 27px 26px; padding-left: 2px; column-gap: 4px; }
.g3 { width: 514px; }
.g4 { width: 210px; }
.g5 { width: 49px; }
.g6 { border-right: 0; }
.btn { display: flex; flex-direction: column; align-items: center; padding-top: 2px; height: 79px; position: relative; text-align: center; flex: none; }
.w48 { width: 48px; } .w50 { width: 50px; } .w62 { width: 62px; } .w72 { width: 72px; } .w88 { width: 88px; }
.w98 { width: 98px; } .w100 { width: 100px; } .w102 { width: 102px; } .w159 { width: 159px; }
.ri { width: 24px; height: 24px; }
.lb { font-size: 13px; line-height: 19px; white-space: nowrap; }
.btn .dd { position: absolute; bottom: 10px; left: 50%; margin-left: -3px; }
.off .lb, .stack { color: #a9a9a9; }
.tool { display: flex; align-items: center; gap: 7px; }
.ti { width: 22px; height: 22px; }
.sq { width: 8px; height: 8px; margin-left: 7px; background: #4b9bc1; border: 1px solid #1f5f85; }
.stack { width: 200px; display: flex; flex-direction: column; padding-left: 7px; font-size: 13px; }
.line { height: 26.500px; display: flex; align-items: center; gap: 6px; }
.si { width: 18px; height: 18px; }
.line span { flex: none; }
.push { margin-left: auto; margin-right: 6px; }
.collapse { position: absolute; right: 9px; top: 65px; width: 12px; height: 8px; }

/* tabs */
.tabs { height: 28px; display: flex; border-top: 1px solid #8a8a8a; flex: none; position: relative; z-index: 3; }
.tab { height: 27px; background: #d0d0d0; border-right: 1px solid #8a8a8a; border-bottom: 1px solid #8a8a8a; display: flex; align-items: center; justify-content: center; font-size: 14.200px; white-space: nowrap; flex: none; }
.tab.on { background: #f7f7f7; font-weight: 700; border-bottom-color: #f7f7f7; font-size: 14px; }
.t56 { width: 56px; } .t66 { width: 66px; } .t71 { width: 71px; } .t73 { width: 73px; } .t75 { width: 75px; }
.t136 { width: 136px; } .t157 { width: 157px; } .t174 { width: 174px; } .t188 { width: 188px; } .t190 { width: 190px; }

/* main */
.main { height: 867px; margin-top: -28px; display: flex; position: relative; flex: none; }
.panel { width: 273px; background: #f7f7f7; border-right: 1px solid #8e8e8e; padding-top: 28px; display: flex; flex-direction: column; flex: none; position: relative; z-index: 1; }
.grip { height: 21px; margin-top: 3px; border-top: 1px solid #c8c8c8; border-bottom: 1px solid #c8c8c8; display: flex; align-items: center; justify-content: center; flex: none; }
.dot { display: block; width: 6px; height: 6px; border-radius: 50%; background: #b4b4b4; border: 1px solid #999; }
.ptabs { height: 25px; margin-top: 5px; width: 270px; border-top: 1px solid #8a8a8a; display: flex; position: relative; overflow: hidden; flex: none; }
.ptab { width: 40px; height: 24px; background: #d0d0d0; border-right: 1px solid #8a8a8a; border-bottom: 1px solid #8a8a8a; display: flex; align-items: center; justify-content: center; flex: none; }
.ptab.on { background: #f7f7f7; border-bottom-color: #f7f7f7; }
.ptab.cut { justify-content: flex-start; padding-left: 10px; width: 30px; border-right: 0; overflow: hidden; }
.pi { width: 18px; height: 18px; }
.parrow { width: 21px; height: 22px; margin-left: 1px; background: #ededed; border: 1px solid #d5d5d5; display: flex; align-items: center; justify-content: center; flex: none; }
.tl { border-right: 5px solid #222; border-top: 4px solid transparent; border-bottom: 4px solid transparent; }
.tr { border-left: 5px solid #222; border-top: 4px solid transparent; border-bottom: 4px solid transparent; }
.filter { height: 32px; margin: 0 3px; width: 266px; border: 1px solid #d0d0d0; display: flex; align-items: center; padding-left: 3px; flex: none; }
.fi { width: 18px; height: 18px; }
.tree { width: 272px; overflow: hidden; flex: none; }
.row { height: 24px; display: flex; align-items: center; white-space: nowrap; font-size: 14px; width: 270px; overflow: hidden; }
.row.root { padding-left: 3px; }
.row.root .ic { margin: 0 5px 0 0; }
.row.sub { padding-left: 23px; }
.tw { width: 18px; flex: none; display: flex; justify-content: center; }
.tw.open::before { content: ""; border-left: 4px solid transparent; border-right: 4px solid transparent; border-top: 4px solid #666; }
.tw.shut::before { content: ""; border-left: 4px solid #666; border-top: 4px solid transparent; border-bottom: 4px solid transparent; }
.ic { width: 18px; height: 18px; margin: 0 5px 0 7px; }
.blue-line { height: 4px; width: 270px; background: #3a8dc5; flex: none; }
.hscroll { margin-top: auto; margin-bottom: 2px; height: 20px; width: 272px; background: #f0f0f0; display: flex; align-items: center; flex: none; }
.chev { width: 20px; height: 20px; }
.chev.end { margin-left: auto; }
.thumb { width: 196px; height: 20px; background: #cdcdcd; flex: none; }
.canvas {
  flex: 1; position: relative; overflow: hidden;
  border-right: 1px solid #999;
  background-color: #fff;
  background-repeat: no-repeat;
  background-image:
    radial-gradient(ellipse 1150px 640px at 1350px 420px, #d8dbe6 0, rgba(216,219,230,.8) 35%, rgba(216,219,230,0) 100%),
    radial-gradient(ellipse 1150px 160px at 1350px 0, #d8dbe6 0, rgba(216,219,230,.8) 35%, rgba(216,219,230,0) 100%),
    linear-gradient(178.500deg, rgba(223,226,236,0) 245px, #dfe2ec 455px, rgba(223,226,236,0) 600px),
    linear-gradient(180deg, #fff 70%, #f5f6f9 100%);
  background-size: 100% 420px, 100% 160px, 100% 100%, 100% 100%;
  background-position: 0 0, 0 420px, 0 0, 0 0;
}
.scene { position: absolute; left: 0; top: 0; }
.dim { font-family: "Liberation Sans", sans-serif; font-size: 22px; font-weight: 700; fill: #8c8c8c; letter-spacing: -.4px; }
.dim-phi { font-family: "DejaVu Sans", sans-serif; font-weight: 400; font-size: 26px; }
.ax-z { font-family: "Liberation Sans", sans-serif; font-size: 15px; fill: #2020e0; }
.ax-x { font-family: "Liberation Sans", sans-serif; font-size: 15px; fill: #d82020; }
.view-bar { position: absolute; left: 646px; top: 34px; display: flex; align-items: center; height: 20px; gap: 6px; }
.vi { width: 20px; height: 20px; }
.vi-a { font-family: "Liberation Sans", sans-serif; font-size: 9px; fill: #1f6f9c; }
.vbox { display: flex; align-items: center; gap: 6px; }
.vbox .dd { margin-right: 2px; }
.doc-ctrls { position: absolute; right: 10px; top: 9px; display: flex; gap: 12px; }
.dc { width: 14px; height: 14px; }
.taskpane { position: absolute; right: 0; top: 59px; width: 33px; border: 1px solid #8a8a8a; border-right: 0; display: flex; flex-direction: column; }
.tp { height: 30px; background: #d3d3d3; border-bottom: 1px solid #8a8a8a; display: flex; align-items: center; justify-content: center; }
.tp:last-child { border-bottom: 0; }
.tp.on { background: #fff; }
.tpi { width: 19px; height: 19px; }
.notch { position: absolute; left: 272px; top: 409px; width: 11px; height: 48px; background: #f7f7f7; border: 1px solid #8e8e8e; border-left: 0; z-index: 2; display: flex; align-items: center; justify-content: center; }

/* bottom tabs */
.btabs { height: 21px; display: flex; border-top: 1px solid #8a8a8a; border-bottom: 1px solid #8a8a8a; padding-left: 2px; background: #f7f7f7; flex: none; position: relative; z-index: 3; }
.navs { width: 80px; display: flex; background: #aeb2bd; }
.nav { flex: 1; border: 1px solid #8b8f9a; display: flex; align-items: center; justify-content: center; }
.nl { border-right: 6px solid #868a96; border-top: 6px solid transparent; border-bottom: 6px solid transparent; }
.nr { border-left: 6px solid #868a96; border-top: 6px solid transparent; border-bottom: 6px solid transparent; }
.btab { display: flex; align-items: center; justify-content: center; font-size: 15px; line-height: 17px; padding-bottom: 2px; background: #d0d0d0; border-right: 1px solid #8a8a8a; flex: none; }
.btab.on { background: #f7f7f7; font-weight: 700; padding-left: 3px; }
.b76 { width: 76px; } .b89 { width: 89px; } .b144 { width: 144px; padding-right: 8px; }

/* status */
.status { height: 21px; display: flex; align-items: center; background: #f7f7f7; padding: 3px 0 0 1px; flex: none; }
.st-text { font-size: 14px; width: 1700px; }
.st-ic { width: 16px; height: 16px; }
.st-units { margin-left: 83px; font-size: 14px; width: 46px; }
.st-up { width: 0; height: 0; margin-left: 22px; border-left: 3px solid transparent; border-right: 3px solid transparent; border-bottom: 4px solid #444; }
.st-end { width: 16px; height: 16px; margin-left: 25px; }

/* taskbar */
.taskbar { height: 50px; display: flex; align-items: center; flex: none; background: linear-gradient(90deg, #3a0718 0, #430a22 35%, #4a1030 68%, #3a0a1c 85%, #2e0612 100%); color: #fff; }
.start { width: 60px; display: flex; justify-content: center; }
.win { width: 20px; height: 20px; }
.tsearch { width: 430px; height: 50px; background: #f5f0f2; border-top: 1px solid #ccc; display: flex; align-items: center; padding-left: 16px; color: #333; font-size: 18px; gap: 14px; }
.tmag { width: 20px; height: 20px; }
.apps { display: flex; }
.app { width: 61.800px; height: 50px; display: flex; align-items: center; justify-content: center; position: relative; flex: none; }
.app.under::after { content: ""; position: absolute; left: 6px; right: 6px; bottom: 0; height: 3px; background: #f5b5c8; }
.app.sw { background: #7d1a3a; }
.app.sw::after { left: 0; right: 0; }
.ai { width: 24px; height: 24px; }
.ai.big { width: 30px; height: 30px; }
.ai.bigger { width: 32px; height: 40px; }
.w-l { font-family: "Liberation Sans", sans-serif; font-size: 10px; font-weight: 700; fill: #fff; text-anchor: middle; }
.sw-l { font-family: "Liberation Sans", sans-serif; font-size: 13px; font-weight: 700; fill: #fff; }
.sw-y { font-family: "Liberation Sans", sans-serif; font-size: 6.500px; font-weight: 700; fill: #fff; }
.tray { margin-left: auto; display: flex; align-items: center; gap: 7px; padding-right: 29px; }
.tr-i { width: 22px; height: 22px; }
.clock { display: flex; flex-direction: column; align-items: center; width: 90px; margin-left: -8px; font-size: 14px; line-height: 24px; }
.notif { position: relative; margin-left: 6px; }
.nt { width: 22px; height: 22px; }
.badge { position: absolute; left: 10px; top: 10px; width: 18px; height: 18px; border-radius: 50%; background: #7d1a3a; border: 1px solid #fff; font-size: 12px; line-height: 16px; text-align: center; }
```
